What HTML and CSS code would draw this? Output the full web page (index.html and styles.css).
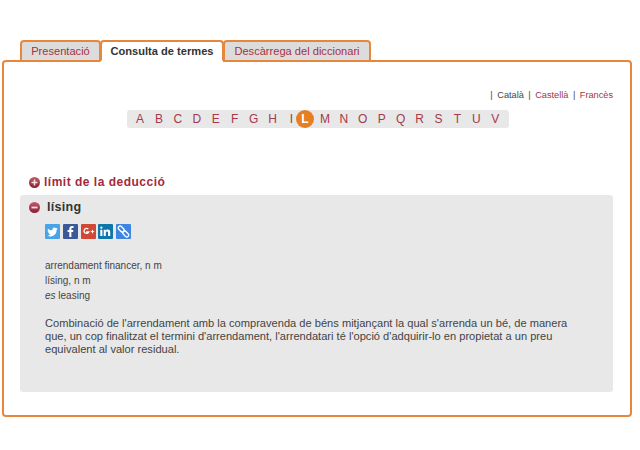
FILE: index.html
```html
<!DOCTYPE html>
<html lang="ca">
<head>
<meta charset="utf-8">
<title>Diccionari</title>
<link rel="stylesheet" href="styles.css">
</head>
<body>
<nav class="tabs">
  <a class="tab">Presentació</a>
  <a class="tab tab-active">Consulta de termes</a>
  <a class="tab">Descàrrega del diccionari</a>
</nav>
<main class="panel">
  <div class="langs">
    <span class="sep">|</span><span class="lang-current">Català</span>
    <span class="sep">|</span><a class="lang">Castellà</a>
    <span class="sep">|</span><a class="lang">Francès</a>
  </div>
  <div class="alpha-row">
    <div class="alpha">
      <a>A</a><a>B</a><a>C</a><a>D</a><a>E</a><a>F</a><a>G</a><a>H</a><a>I</a><a class="current">L</a><a>M</a><a>N</a><a>O</a><a>P</a><a>Q</a><a>R</a><a>S</a><a>T</a><a>U</a><a>V</a>
    </div>
  </div>
  <div class="term-closed">
    <svg class="toggle" viewBox="0 0 11 11"><defs><linearGradient id="gr1" x1="0" y1="0" x2="0" y2="1"><stop offset="0" stop-color="#c25a6a"/><stop offset="1" stop-color="#8a1f33"/></linearGradient></defs><circle cx="5.5" cy="5.5" r="5.5" fill="url(#gr1)"/><path d="M2.500 5.500h6M5.500 2.500v6" stroke="#f3dfe2" stroke-width="1.600"/></svg>
    <span>límit de la deducció</span>
  </div>
  <section class="term-open">
    <div class="term-head">
      <svg class="toggle" viewBox="0 0 11 11"><defs><linearGradient id="gr2" x1="0" y1="0" x2="0" y2="1"><stop offset="0" stop-color="#c25a6a"/><stop offset="1" stop-color="#8a1f33"/></linearGradient></defs><circle cx="5.500" cy="5.500" r="5.500" fill="url(#gr2)"/><path d="M2.500 5.500h6" stroke="#f3dfe2" stroke-width="1.800"/></svg>
      <h2>lísing</h2>
    </div>
    <div class="share">
      <a class="ic tw"><svg viewBox="0 0 15 15"><path fill="#fff" d="M12.600 4.500c-.400.200-.800.300-1.200.350.400-.250.750-.650.900-1.150-.400.250-.850.400-1.300.500a2.100 2.100 0 0 0-3.600 1.900C5.600 6.500 4.100 5.700 3 4.400c-.600 1-.300 2.200.650 2.800-.350 0-.650-.100-.950-.250 0 1 .700 1.900 1.700 2.100-.300.100-.650.100-.950.050.300.850 1.050 1.450 2 1.450A4.200 4.200 0 0 1 2.300 11.400a6 6 0 0 0 9.250-5.300c.400-.300.750-.650 1.050-1.600z"/></svg></a>
      <a class="ic fb"><svg viewBox="0 0 15 15"><path fill="#fff" d="M8.400 13V8h1.700l.3-2H8.400V4.900c0-.600.200-1 1-1h1.100V2.100C10.300 2.100 9.700 2 9 2 7.400 2 6.300 3 6.300 4.700V6H4.600v2h1.700v5z"/></svg></a>
      <a class="ic gp"><svg viewBox="0 0 15 15"><path fill="none" stroke="#fff" stroke-width="1.300" d="M7.300 5.100A2.500 2.500 0 1 0 7.800 8H5.200"/><path stroke="#fff" d="M9.800 7.600h3.400M11.500 5.900v3.400"/></svg></a>
      <a class="ic in"><svg viewBox="0 0 15 15"><path fill="#fff" d="M2.300 5.800h2.100V12H2.300zM3.350 2.500a1.150 1.150 0 1 1 0 2.300 1.150 1.150 0 0 1 0-2.300zM5.700 5.800h2v.9c.4-.6 1-1.100 2-1.100 2 0 2.500 1.200 2.500 3V12h-2.100V8.900c0-.8-.2-1.500-1.100-1.500s-1.200.7-1.200 1.500V12H5.700z"/></svg></a>
      <a class="ic ln"><svg viewBox="0 0 15 15"><g fill="none" stroke="#fff" stroke-width="1.400"><rect x="1.800" y="3.200" width="7" height="3.800" rx="1.900" transform="rotate(45 5.300 5.100)"/><rect x="6.200" y="8" width="7" height="3.800" rx="1.900" transform="rotate(45 9.700 9.900)"/></g></svg></a>
    </div>
    <div class="forms">
      <p>arrendament financer, n m</p>
      <p>lísing, n m</p>
      <p><i>es</i> leasing</p>
    </div>
    <p class="def">Combinació de l'arrendament amb la compravenda de béns mitjançant la qual s'arrenda un bé, de manera que, un cop finalitzat el termini d'arrendament, l'arrendatari té l'opció d'adquirir-lo en propietat a un preu equivalent al valor residual.</p>
  </section>
</main>
</body>
</html>
```

FILE: styles.css
```css
* { box-sizing: border-box; }
html, body { margin: 0; padding: 0; background: #fff; }
body { width: 640px; height: 450px; overflow: hidden; padding-top: 40px; font-family: "Liberation Sans", Arial, sans-serif; color: #444; }
.tabs { display: flex; height: 22px; margin-left: 20px; position: relative; z-index: 1; }
.tab { height: 22px; padding-top: 2px; font-size: 11.100px; line-height: 15px; text-align: center; color: #a5323f; background: #dcdcdc; border: 2px solid #e8873c; border-radius: 4px 4px 0 0; }
.tab:nth-child(1) { width: 81px; }
.tab:nth-child(2) { width: 124px; margin-left: -1px; }
.tab:nth-child(3) { width: 148px; margin-left: -1px; }
.tab-active { background: #fff; color: #333; font-weight: bold; border-bottom-color: #fff; }
.panel { width: 630px; height: 357px; margin: -2px 0 0 2px; padding: 27px 17px 0 16px; border: 2px solid #e8873c; border-radius: 4px; }
.langs { display: flex; justify-content: flex-end; font-size: 9.200px; line-height: 12px; height: 12px; gap: 4.500px; color: #444; }
.lang { color: #a5323f; }
.alpha-row { display: flex; justify-content: center; margin-top: 9px; padding-left: 3px; }
.alpha { display: flex; align-items: center; height: 18px; width: 382px; padding-left: 3.500px; background: #e8e8e8; border-radius: 3px; font-size: 12px; color: #a33b4a; }
.alpha a { width: 18.950px; text-align: center; }
.alpha a.current { width: 18px; height: 18px; line-height: 18px; margin: 0 1.500px 0 -5px; border-radius: 50%; background: #e67e22; color: #fff; font-weight: bold; }
.term-closed { display: flex; align-items: center; gap: 4.500px; height: 16px; margin: 46px 0 0 8.500px; font-size: 12px; font-weight: bold; color: #a5283c; letter-spacing: 0.500px; }
.toggle { width: 11px; height: 11px; flex: none; }
.term-open { height: 197px; margin-top: 5px; padding: 4px 0 0 8.500px; background: #e8e8e8; border-radius: 3px; }
.term-head { display: flex; align-items: center; gap: 7.500px; height: 16px; }
.term-head h2 { margin: 0; font-size: 12.500px; font-weight: bold; color: #333; letter-spacing: 0.300px; }
.share { display: flex; gap: 2.800px; margin: 9px 0 0 16.500px; }
.ic { display: block; width: 15px; height: 15px; border-radius: 1px; }
.ic svg { display: block; width: 15px; height: 15px; }
.tw { background: #4aa3e6; }
.fb { background: #3b5998; }
.gp { background: #d14836; }
.in { background: #0e76a8; }
.ln { background: #3d85e0; }
.forms { margin: 19px 0 0 16.500px; font-size: 10px; line-height: 15px; color: #444; }
.forms p { margin: 0; }
.def { width: 530px; margin: 14px 0 0 16.500px; font-size: 11.100px; line-height: 13px; color: #444; }
```
